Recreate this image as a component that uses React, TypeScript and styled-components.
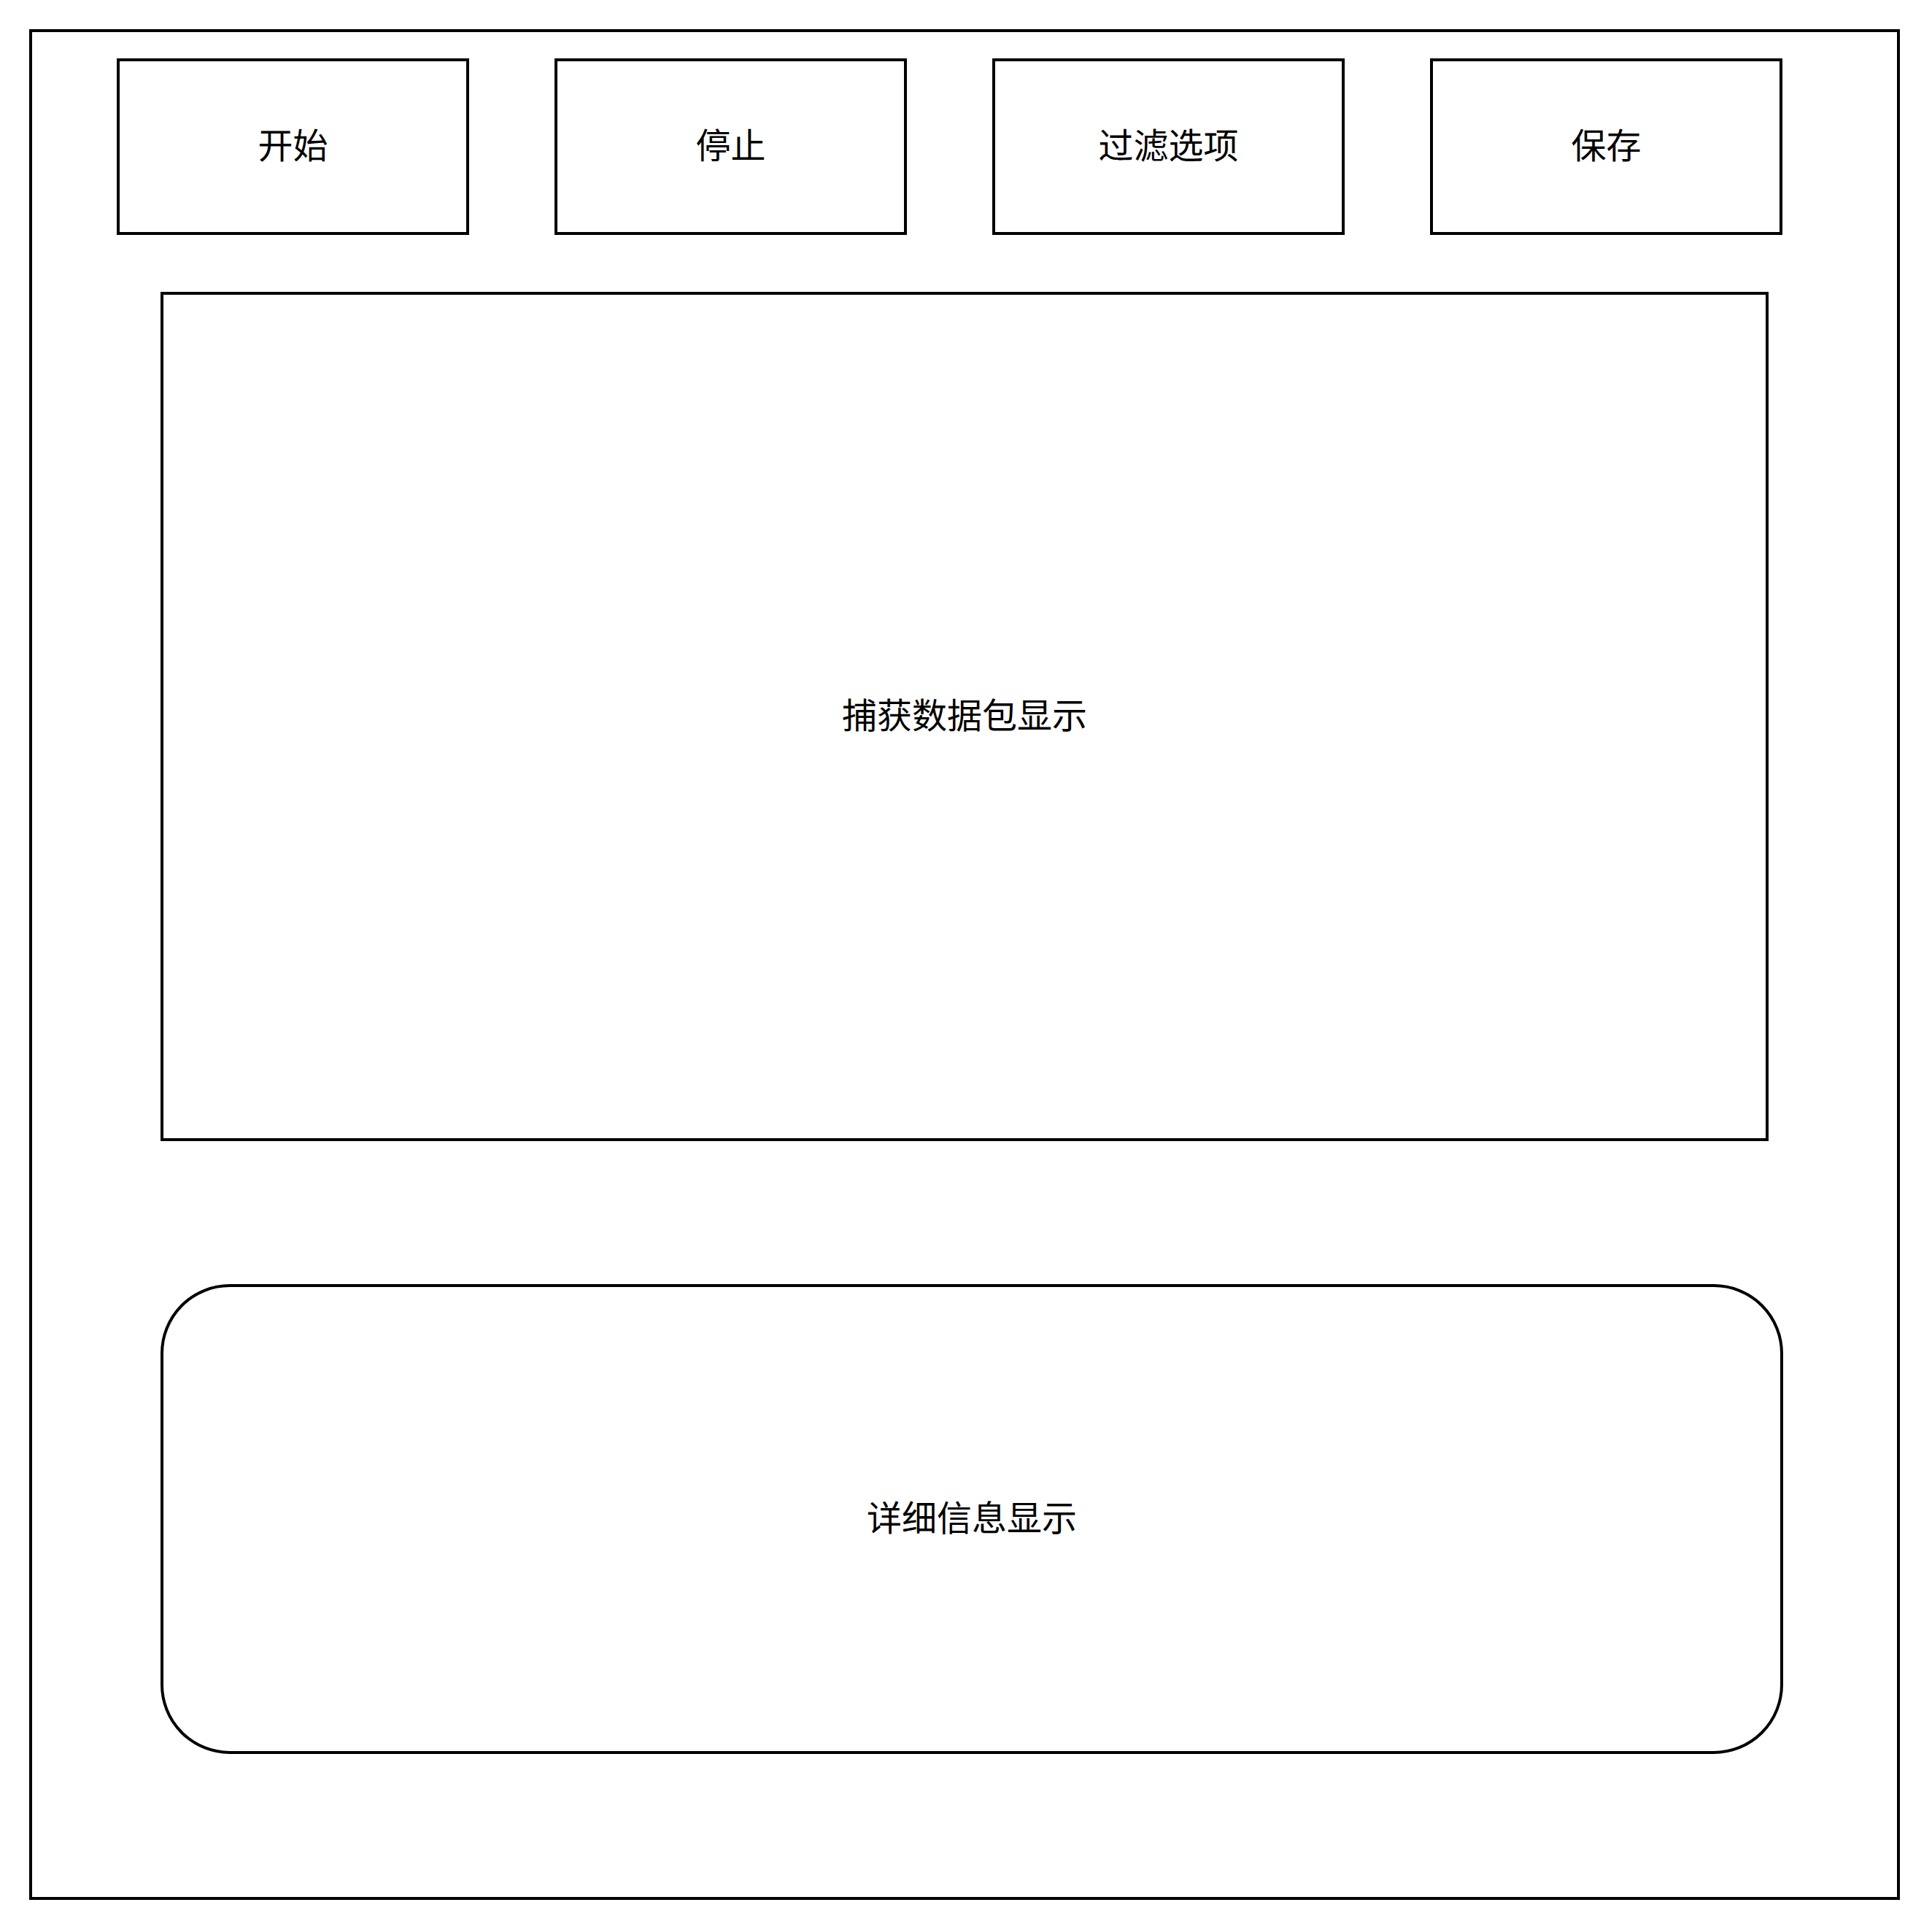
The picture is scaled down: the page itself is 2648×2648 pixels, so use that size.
import styled, { createGlobalStyle } from "styled-components";

const GlobalStyle = createGlobalStyle`
  html, body {
    margin: 0;
    padding: 0;
    background: #ffffff;
  }
  body {
    font-family: "Noto Sans CJK SC", "Noto Sans", sans-serif;
    color: #000000;
  }
`;

const Page = styled.div`
  padding: 40px;
  width: 2648px;
  height: 2648px;
  box-sizing: border-box;
`;

const Frame = styled.div`
  width: 2564px;
  height: 2564px;
  box-sizing: border-box;
  border: 4px solid #000;
  display: flex;
  flex-direction: column;
  align-items: flex-start;
`;

const Toolbar = styled.div`
  margin-top: 36px;
  margin-left: 116px;
  display: grid;
  grid-template-columns: repeat(4, 483px);
  column-gap: 117px;
`;

/* text sits a few px high in the source, so the bottom padding lifts it */
const ToolButton = styled.button`
  height: 242px;
  box-sizing: border-box;
  border: 4px solid #000;
  border-radius: 0;
  background: #fff;
  display: flex;
  align-items: center;
  justify-content: center;
  padding: 0 0 10px;
  font-family: "Noto Sans CJK SC", "Noto Sans", sans-serif;
  font-size: 48px;
  color: #000;
  cursor: pointer;
`;

const Panel = styled.section<{ $width: number; $height: number; $gap: number; $radius?: number }>`
  margin-top: ${(p) => p.$gap}px;
  margin-left: 176px;
  width: ${(p) => p.$width}px;
  height: ${(p) => p.$height}px;
  box-sizing: border-box;
  border: 4px solid #000;
  border-radius: ${(p) => p.$radius ?? 0}px;
  display: flex;
  align-items: center;
  justify-content: center;
  padding-bottom: 10px;
  font-size: 48px;
`;

const buttons = ["开始", "停止", "过滤选项", "保存"];

const App = () => {
  return (
    <>
      <GlobalStyle />
      <Page>
        <Frame>
          <Toolbar>
            {buttons.map((label) => (
              <ToolButton key={label}>{label}</ToolButton>
            ))}
          </Toolbar>
          <Panel $width={2204} $height={1164} $gap={78}>
            捕获数据包显示
          </Panel>
          <Panel $width={2224} $height={644} $gap={196} $radius={95}>
            详细信息显示
          </Panel>
        </Frame>
      </Page>
    </>
  );
};

export default App;
